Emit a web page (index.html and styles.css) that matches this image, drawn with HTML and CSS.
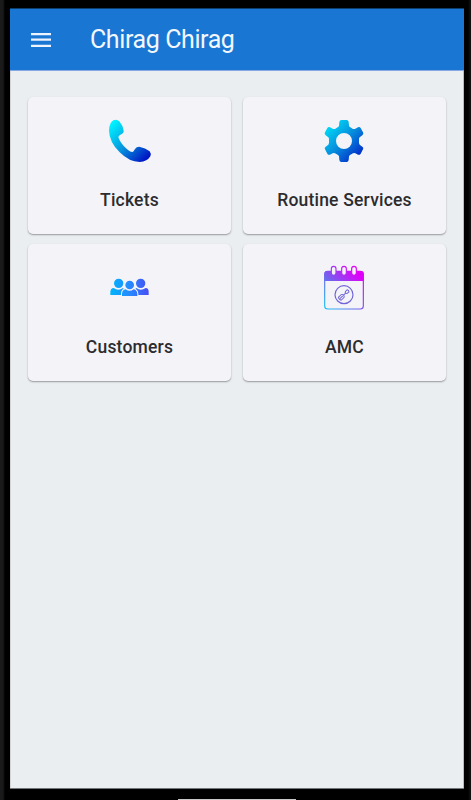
FILE: index.html
```
<!DOCTYPE html>
<html lang="en">
<head>
<meta charset="utf-8">
<title>Chirag Chirag</title>
<link rel="stylesheet" href="styles.css">
</head>
<body>
<div class="device">
  <div class="screen">
    <header class="app-bar">
      <svg class="menu" viewBox="0 0 20 14"><path d="M0 1h20M0 6.7h20M0 12.8h20" stroke="#edf4fd" stroke-width="2.3"/></svg>
      <h1 class="title">Chirag Chirag</h1>
    </header>
    <main class="grid">
      <section class="card">
        <svg class="icon" viewBox="-3 0 213 210">
          <defs><linearGradient id="phone" x1="0" y1="0" x2="1" y2="1"><stop offset="0.08" stop-color="#00f2ff"/><stop offset="0.5" stop-color="#0794dd"/><stop offset="0.9" stop-color="#0018c4"/></linearGradient></defs>
          <path fill="url(#phone)" d="M55 46Q65 41 73 49Q84 62 86 77Q87 85 76 89Q70 92 70 97Q76 114 93 130Q104 141 112 141Q115 141 118 135Q123 125 133 125Q151 129 164 139Q169 145 166 154Q157 170 134 171Q103 171 74 142Q43 111 42 77Q42 55 55 46Z"/>
        </svg>
        <h2 class="label">Tickets</h2>
      </section>
      <section class="card">
        <svg class="icon" viewBox="-3 0 213 210">
          <defs><linearGradient id="gear" gradientUnits="userSpaceOnUse" x1="58" y1="60" x2="151" y2="153"><stop offset="0" stop-color="#00d9f5"/><stop offset="0.5" stop-color="#078bdc"/><stop offset="1" stop-color="#002ac8"/></linearGradient></defs>
          <path fill="url(#gear)" fill-rule="evenodd" d="M94 45H110Q115 45 116 51L117 62Q118 65 121 67L129 72Q133 73 136 71L144 67Q149 65 152 69L159 82Q162 87 157 91L149 97Q146 99 147 108Q146 117 149 119L157 125Q162 129 159 133L152 146Q149 151 144 149L136 145Q133 143 129 145L121 149Q118 151 117 154L116 165Q115 171 110 171H94Q89 171 88 165L87 154Q86 151 83 149L75 145Q71 143 68 145L60 149Q55 151 52 146L45 133Q42 129 47 125L55 119Q58 117 57 108Q58 99 55 97L47 91Q42 87 45 82L52 69Q55 65 60 67L68 71Q71 73 75 72L83 67Q86 65 87 62L88 51Q89 45 94 45ZM102 84A24 24 0 1 0 102 132A24 24 0 1 0 102 84Z"/>
        </svg>
        <h2 class="label">Routine Services</h2>
      </section>
      <section class="card">
        <svg class="icon" viewBox="-3 -24 213 210">
          <defs><linearGradient id="people" gradientUnits="userSpaceOnUse" x1="46" y1="80" x2="161" y2="80"><stop offset="0" stop-color="#00b5fc"/><stop offset="0.5" stop-color="#268aff"/><stop offset="1" stop-color="#4a4df4"/></linearGradient></defs>
          <g fill="url(#people)">
            <path d="M71 56A14 14 0 1 1 71 84A14 14 0 1 1 71 56ZM137 56A14 14 0 1 1 137 84A14 14 0 1 1 137 56Z"/>
            <path d="M46 105V95Q47 84 56 84Q70 94 84 84Q88 89 90 90V105ZM118 105V90L124 84Q137 94 152 84Q161 85 161 95V105Z"/>
            <path stroke="#f4f3f8" stroke-width="6" paint-order="stroke" d="M81 108V101Q82 89 92 88Q104 97 116 88Q126 90 127 101V108ZM104 62A13 13 0 1 1 104 88A13 13 0 1 1 104 62Z"/>
          </g>
        </svg>
        <h2 class="label">Customers</h2>
      </section>
      <section class="card">
        <svg class="icon" viewBox="-2 -9 213 210">
          <defs><linearGradient id="cal" gradientUnits="userSpaceOnUse" x1="48" y1="160" x2="148" y2="60"><stop offset="0" stop-color="#20c0f4"/><stop offset="0.5" stop-color="#7560ee"/><stop offset="1" stop-color="#e000fa"/></linearGradient></defs>
          <rect x="45" y="49" width="116" height="113" rx="9" fill="none" stroke="url(#cal)" stroke-width="3.5"/>
          <path fill="url(#cal)" d="M44 78V57Q44 48 53 48H153Q162 48 162 57V78Z"/>
          <g fill="#f4f3f8" stroke="url(#cal)" stroke-width="3.5">
            <rect x="65" y="34" width="14" height="27" rx="7"/><rect x="96" y="34" width="14" height="27" rx="7"/><rect x="126" y="34" width="14" height="27" rx="7"/>
          </g>
          <circle cx="103" cy="119" r="27" fill="none" stroke="#7164d9" stroke-width="3.5"/>
          <g transform="translate(103 119) rotate(-44)" fill="none" stroke="#7164d9" stroke-width="3">
            <path d="M-18 -6H-6L-2 -3V3L-6 6H-18Q-21 0 -18 -6ZM-17 0H-5M-2 0H7"/>
            <path d="M7 -2L10 -4H17Q20 0 17 4H10L7 2Z"/>
          </g>
        </svg>
        <h2 class="label">AMC</h2>
      </section>
    </main>
  </div>
  <div class="home-bar"></div>
</div>
</body>
</html>
```
FILE: styles.css
```
* { box-sizing: border-box; }
body { margin: 0; background: #000; font-family: Roboto, "Liberation Sans", sans-serif; }
.device {
  height: 800px;
  padding: 8px 7px 0 10px;
  display: flex;
  flex-direction: column;
  overflow: hidden;
  background: linear-gradient(90deg, #1b1b1b 0, #191919 3px, #000 5px, #000 468px, #151515 471px);
}
.screen {
  height: 781px;
  flex: none;
  background: #eaeef1;
  border-bottom: 1px solid #73777a;
  box-shadow: inset 1px 0 #d2d5d7, inset -1px 0 #b9bcbf;
}
.app-bar {
  height: 63px;
  display: flex;
  align-items: center;
  padding-left: 21px;
  background: #1976d2;
  border-top: 1px solid #0b3f70;
  border-bottom: 1px solid #86a9e5;
}
.menu { width: 20px; height: 14px; }
.title {
  margin: 0 0 0 39px;
  font-size: 25px;
  font-weight: 400;
  line-height: 30px;
  letter-spacing: -.4px;
  color: #f2f7fd;
}
.grid {
  display: grid;
  grid-template-columns: 203px 203px;
  grid-auto-rows: 137px;
  gap: 10px 12px;
  padding: 26px 0 0 18px;
}
.card {
  display: flex;
  flex-direction: column;
  align-items: center;
  padding-top: 8px;
  background: #f4f3f8;
  border-radius: 5px;
  box-shadow: 0 1px 2px rgba(0, 0, 0, .28), 0 1px 1px rgba(0, 0, 0, .1);
}
.icon { width: 71px; height: 70px; }
.label {
  margin: 14px 0 0;
  font-size: 17.5px;
  font-weight: 500;
  line-height: 22px;
  letter-spacing: .2px;
  color: #2c2c2f;
}
.home-bar {
  width: 118px;
  height: 1px;
  margin: 10px 0 0 168px;
  flex: none;
  background: #c8c8c8;
}
```
